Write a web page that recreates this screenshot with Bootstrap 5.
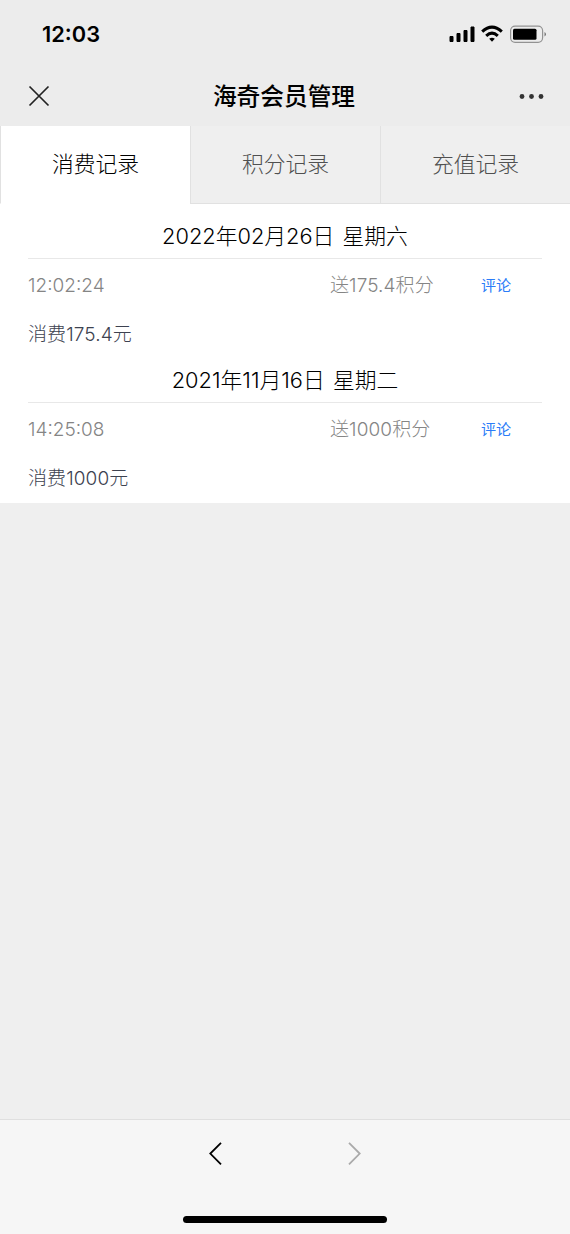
<!DOCTYPE html>
<html lang="zh-CN">
<head>
<meta charset="utf-8">
<meta name="viewport" content="width=device-width, initial-scale=1">
<title>海奇会员管理</title>
<link href="https://cdn.jsdelivr.net/npm/bootstrap@5.3.0/dist/css/bootstrap.min.css" rel="stylesheet">
<style>
body{font-family:Inter,"Noto Sans CJK SC",sans-serif;font-weight:300;background:#efefef;color:#000;line-height:1}
.screen{height:1234px;overflow:hidden}
.status-bar{height:69px;padding:0 24px 2px 42px}
.top-area{background:#ececec;height:126px}
.clock{font-size:21.8px;font-weight:600;line-height:65px;padding-top:2px}
.title-bar{height:57px;padding:0 24px 3px 28px}
.page-title{font-size:23.7px;font-weight:500;padding-top:2px}
.record-tabs{height:78px}
.record-tabs .nav-link{height:78px;padding:0;line-height:77px;font-size:21.8px;color:#505050;border:0;border-left:1px solid #e1e1e1;border-bottom:1px solid #e1e1e1;border-radius:0;background:#efefef}
.record-tabs .nav-link.active{color:#000;background:#fff;border-bottom-color:#fff}
.records{height:299px;padding:0 28px}
.day-head{height:55px;line-height:65px;font-size:21.8px;word-spacing:2px;border-bottom:1px solid #e8e8e8}
.day-row{height:53px;line-height:54px;font-size:19px;color:#858585}
.time-cell{width:302px}
.points-cell{width:151px;letter-spacing:.1px}
.review-link{font-size:15.1px;font-weight:400;color:#2b7cf8}
.spend{height:36px;line-height:46px;font-size:19px;letter-spacing:.1px;color:#3d4250}
.bottom-bar{height:115px;background:#f6f6f6;border-top:1px solid #dfdfdf}
.arrows{height:67px;gap:124px}
.home-line{width:204px;height:7px;background:#000;margin-top:29px}
</style>
</head>
<body>
<div class="screen d-flex flex-column">
  <header class="top-area">
    <div class="status-bar d-flex justify-content-between align-items-center">
      <span class="clock">12:03</span>
      <svg width="98" height="20" viewBox="0 0 98 20" aria-hidden="true">
        <g stroke="#000" stroke-linejoin="round"><path d="M2 12.500h3v5h-3zM9 9.500h3v8h-3zM16 6.500h3v11h-3zM23 3h3v14.500h-3z"/></g>
        <g fill="none" stroke="#000" stroke-width="3"><path d="M34.200 7.700Q44 -1.500 53.800 7.700"/><path d="M38.200 11.800Q44 6.300 49.800 11.800"/></g>
        <path d="M41.200 14.700Q44 12.600 46.800 14.700L44 17.700Z"/>
        <rect x="62.600" y="2.100" width="32" height="16.200" rx="4.500" fill="none" stroke="#929292" stroke-width="1.200"/>
        <rect x="65" y="4.800" width="23.500" height="11" rx="1.500"/>
        <path d="M96.500 8v4.500q1.500-.6 1.500-2.200T96.500 8" fill="#777"/>
      </svg>
    </div>
    <div class="title-bar d-flex justify-content-between align-items-center">
      <svg width="22" height="22" viewBox="0 0 22 22" fill="none" stroke="#222" stroke-width="1.700"><path d="M1.500 1.500l19 19m0-19l-19 19"/></svg>
      <span class="page-title">海奇会员管理</span>
      <svg width="28" height="8" viewBox="0 0 28 8" fill="#333"><circle cx="4" cy="4.500" r="2.400"/><circle cx="13.500" cy="4.500" r="2.400"/><circle cx="23" cy="4.500" r="2.400"/></svg>
    </div>
  </header>
  <nav class="record-tabs nav nav-fill row g-0">
    <a class="nav-link active col-4" href="#">消费记录</a>
    <a class="nav-link col-4" href="#">积分记录</a>
    <a class="nav-link col-4" href="#">充值记录</a>
  </nav>
  <main class="records bg-white">
    <section>
      <div class="day-head text-center">2022年02月26日 星期六</div>
      <div class="day-row d-flex"><span class="time-cell">12:02:24</span><span class="points-cell">送175.4积分</span><a class="review-link text-decoration-none" href="#">评论</a></div>
      <div class="spend">消费175.4元</div>
    </section>
    <section>
      <div class="day-head text-center">2021年11月16日 星期二</div>
      <div class="day-row d-flex"><span class="time-cell">14:25:08</span><span class="points-cell">送1000积分</span><a class="review-link text-decoration-none" href="#">评论</a></div>
      <div class="spend">消费1000元</div>
    </section>
  </main>
  <footer class="bottom-bar mt-auto d-flex flex-column align-items-center">
    <div class="arrows d-flex align-items-center">
      <svg width="15" height="24" viewBox="0 0 15 24" fill="none" stroke="#000" stroke-width="1.800"><path d="M13 .8L2.300 11.600 13 22.400"/></svg>
      <svg width="15" height="24" viewBox="0 0 15 24" fill="none" stroke="#aaa" stroke-width="1.800"><path d="M2 .8l10.700 10.800L2 22.400"/></svg>
    </div>
    <div class="home-line rounded-pill"></div>
  </footer>
</div>
<script src="https://cdn.jsdelivr.net/npm/bootstrap@5.3.0/dist/js/bootstrap.bundle.min.js"></script>
</body>
</html>
